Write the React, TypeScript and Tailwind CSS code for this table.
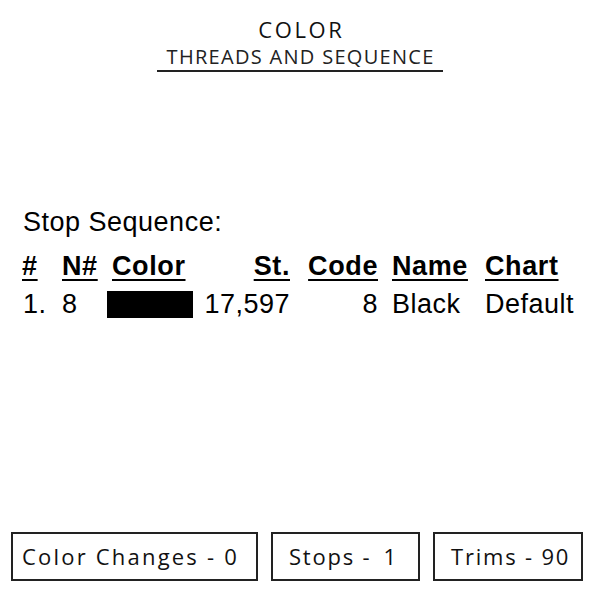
export default function App() {
  const mont = { fontFamily: '"Open Sans", "Noto Sans", sans-serif' };
  return (
    <div className="w-[600px] h-[600px] bg-white flex flex-col text-black relative" style={{ fontFamily: '"Liberation Sans", Arial, sans-serif' }}>
      <div className="flex flex-col items-center pt-[17px]" style={mont}>
        <div className="text-[22px] leading-[24px] text-[#111] tracking-[2.6px] pl-[2.6px]">COLOR</div>
        <div className="text-[20px] leading-[27px] text-[#222] tracking-[1.3px] pl-[1.3px] mt-[2px]">THREADS AND SEQUENCE</div>
        <div className="w-[286px] h-[2px] bg-[#222]" />
      </div>
      <div className="pl-[23px] mt-[135px] text-[27px] leading-[30px] tracking-[0.5px]">Stop Sequence:</div>
      <div className="flex pl-[22px] mt-[14px] text-[27px] leading-[30px] tracking-[0.6px] font-bold underline decoration-2 underline-offset-[4px]">
        <div className="w-[40px]">#</div>
        <div className="w-[45px]">N#</div>
        <div className="w-[86px] pl-[5px]">Color</div>
        <div className="w-[97px] text-right">St.</div>
        <div className="w-[88px] text-right">Code</div>
        <div className="w-[107px] pl-[14px]">Name</div>
        <div>Chart</div>
      </div>
      <div className="flex pl-[22px] mt-[8px] text-[27px] leading-[30px] tracking-[0.5px] items-center">
        <div className="w-[40px] pl-[1px]">1.</div>
        <div className="w-[45px]">8</div>
        <div className="w-[86px] h-[27px] bg-black" />
        <div className="w-[97px] text-right">17,597</div>
        <div className="w-[88px] text-right">8</div>
        <div className="w-[107px] pl-[14px]">Black</div>
        <div>Default</div>
      </div>
      <div className="flex mt-auto mb-[19px] pl-[11px] gap-[13px] text-[22px] tracking-[1.8px] text-[#111]" style={mont}>
        <div className="w-[247px] h-[49px] border-2 border-[#222] flex items-center pl-[9px] tracking-[2.2px]">Color Changes - 0</div>
        <div className="w-[149px] h-[49px] border-2 border-[#222] flex items-center pl-[16px]">
          <span>Stops -</span>
          <span className="pl-[12px]">1</span>
        </div>
        <div className="w-[150px] h-[49px] border-2 border-[#222] flex items-center pl-[16px]">Trims - 90</div>
      </div>
    </div>
  );
}
